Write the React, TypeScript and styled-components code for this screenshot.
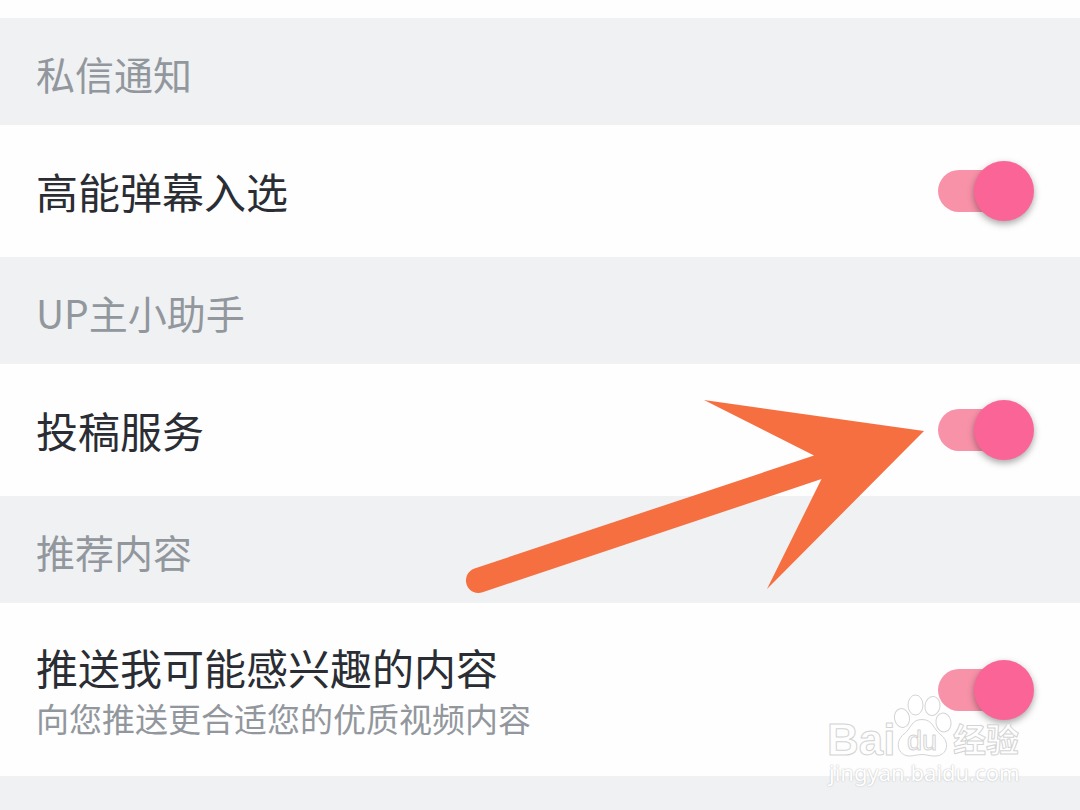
import { useId, useState } from "react";
import type { ReactNode } from "react";
import styled, { createGlobalStyle } from "styled-components";

const GlobalStyle = createGlobalStyle`
  *, *::before, *::after { box-sizing: border-box; }
  html, body, #root { height: 100%; }
  body {
    margin: 0;
    background: #eff1f3;
    font-family: "Noto Sans CJK SC", sans-serif;
  }
`;

const Page = styled.main`
  min-height: 100%;
  padding-top: 18px;
  overflow: hidden;
  background: linear-gradient(#fefefe 18px, #eff1f3 18px);
`;

const SectionTitle = styled.h2`
  margin: 0;
  padding: 27px 36px 24px;
  color: #92979d;
  font-size: 39px;
  font-weight: 400;
  line-height: 56px;
`;

const Row = styled.div`
  position: relative;
  display: flex;
  align-items: center;
  justify-content: space-between;
  gap: 24px;
  min-height: 132px;
  padding: 35px 46px 35px 36px;
  background: #fefefe;
`;

const Labels = styled.div`
  display: flex;
  flex-direction: column;
`;

const Label = styled.label`
  color: #2a2d33;
  font-size: 42px;
  line-height: 58px;
`;

const Hint = styled.span`
  color: #92979d;
  font-size: 33px;
  line-height: 45px;
`;

const Switch = styled.input`
  position: relative;
  flex: none;
  appearance: none;
  width: 96px;
  height: 42px;
  margin: 0;
  cursor: pointer;

  &::before {
    content: "";
    display: block;
    width: 90px;
    height: 42px;
    border-radius: 21px;
    background: #c4c7cb;
  }

  &::after {
    content: "";
    position: absolute;
    top: -9px;
    left: 0;
    width: 60px;
    height: 60px;
    border-radius: 50%;
    background: #f4f4f4;
    box-shadow: 0 3px 7px rgba(0, 0, 0, 0.34);
  }

  &:checked::before { background: #f892a9; }
  &:checked::after { left: 36px; background: #fb6496; }
`;

const Arrow = styled.svg`
  position: absolute;
  z-index: 1;
  top: 34px;
  right: 156px;
  width: 460px;
  height: 194px;
  overflow: visible;
  pointer-events: none;
`;

const Watermark = styled.div`
  position: absolute;
  z-index: 1;
  right: 56px;
  bottom: -9px;
  display: flex;
  flex-direction: column;
  width: 198px;
  pointer-events: none;
`;

const WatermarkLogo = styled.svg`
  display: block;
  width: 198px;
  height: 66px;
  overflow: visible;
  fill: rgba(255, 255, 255, 0.75);
  stroke: #d4d4d4;
  stroke-width: 1px;
  stroke-linejoin: round;
`;

const WatermarkUrl = styled.span`
  padding-left: 3px;
  color: #ffffff;
  font-family: "Noto Sans", "Open Sans", sans-serif;
  font-size: 22px;
  line-height: 26px;
  white-space: nowrap;
  text-shadow: 0 0 2px #c8c8c8, 0 0 1px #c8c8c8;
`;

type SettingProps = { title: string; hint?: string; children?: ReactNode };

function Setting({ title, hint, children }: SettingProps) {
  const id = useId();
  const [on, setOn] = useState(true);
  return (
    <Row>
      <Labels>
        <Label htmlFor={id}>{title}</Label>
        {hint && <Hint id={`${id}-hint`}>{hint}</Hint>}
      </Labels>
      <Switch
        id={id}
        type="checkbox"
        role="switch"
        aria-describedby={hint ? `${id}-hint` : undefined}
        checked={on}
        onChange={(event) => setOn(event.target.checked)}
      />
      {children}
    </Row>
  );
}

function PointerArrow() {
  return (
    <Arrow viewBox="464 398 460 194" aria-hidden="true">
      <path
        fill="#f66f40"
        d="M924 431 L704 400 L814 455.5 L474.5 568.5 A12.4 12.4 0 0 0 482.5 592.3 L821.5 479 L767 589 Z"
      />
    </Arrow>
  );
}

function BaiduWatermark() {
  return (
    <Watermark>
      <WatermarkLogo viewBox="826 693 198 66" aria-hidden="true">
        <text x="827" y="755" fontFamily="Liberation Sans, sans-serif" fontSize="44" fontWeight="700">Bai</text>
        <ellipse cx="902" cy="718" rx="7.5" ry="9.5" transform="rotate(-12 902 718)" />
        <ellipse cx="915.5" cy="705" rx="7.5" ry="10" />
        <ellipse cx="932.5" cy="706" rx="7.5" ry="9.5" transform="rotate(8 932.5 706)" />
        <ellipse cx="943.5" cy="722.5" rx="7.5" ry="9.5" transform="rotate(-10 943.5 722.5)" />
        <path d="M922 719.5 C911 719.5 911 729 904 734 C894 742 898 755.5 909 756 C914 756 917 754.5 922 754.5 C927 754.5 931 756.5 936 756 C948 755 950 742 941 735 C933 729 933 719.5 922 719.5 Z" />
        <text x="907" y="750" fontFamily="Liberation Sans, sans-serif" fontSize="27">du</text>
        <text x="953" y="752" fontFamily="Noto Sans CJK SC, sans-serif" fontSize="33" fontWeight="700">经验</text>
      </WatermarkLogo>
      <WatermarkUrl>jingyan.baidu.com</WatermarkUrl>
    </Watermark>
  );
}

export default function App() {
  return (
    <>
      <GlobalStyle />
      <Page>
        <section>
          <SectionTitle>私信通知</SectionTitle>
          <Setting title="高能弹幕入选" />
        </section>
        <section>
          <SectionTitle>UP主小助手</SectionTitle>
          <Setting title="投稿服务">
            <PointerArrow />
          </Setting>
        </section>
        <section>
          <SectionTitle>推荐内容</SectionTitle>
          <Setting title="推送我可能感兴趣的内容" hint="向您推送更合适您的优质视频内容">
            <BaiduWatermark />
          </Setting>
        </section>
      </Page>
    </>
  );
}
